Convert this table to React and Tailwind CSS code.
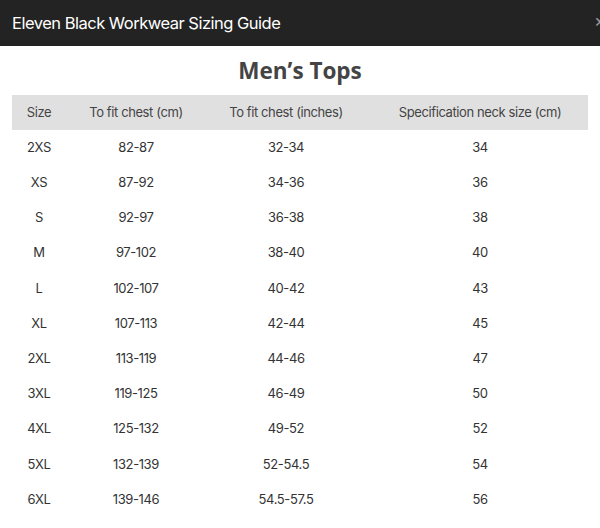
import React from 'react';

const rows = [
  ['2XS', '82-87', '32-34', '34'],
  ['XS', '87-92', '34-36', '36'],
  ['S', '92-97', '36-38', '38'],
  ['M', '97-102', '38-40', '40'],
  ['L', '102-107', '40-42', '43'],
  ['XL', '107-113', '42-44', '45'],
  ['2XL', '113-119', '44-46', '47'],
  ['3XL', '119-125', '46-49', '50'],
  ['4XL', '125-132', '49-52', '52'],
  ['5XL', '132-139', '52-54.5', '54'],
  ['6XL', '139-146', '54.5-57.5', '56'],
];

const cols = 'grid grid-cols-[54px_140px_160px_228px]';

export default function App() {
  return (
    <div className="w-[600px] h-[528px] overflow-hidden bg-white font-['Inter',sans-serif]">
      {/* Top bar */}
      <div className="relative h-[46px] bg-[#232323] flex items-center pl-3">
        <h2 className="text-white text-[16.5px] tracking-[-0.5px]">Eleven Black Workwear Sizing Guide</h2>
        <span className="absolute right-[-6px] top-[12px] text-[#999] text-[18px] leading-none">×</span>
      </div>

      {/* Title */}
      <h1 className="text-center text-[#444] text-[22.5px] font-bold mt-[12px] h-[26px] leading-[26px] font-['Open_Sans',sans-serif]">
        Men’s Tops
      </h1>

      {/* Table */}
      <div className="mx-3 mt-[11px] text-[13px] tracking-[-0.4px]">
        <div className={`${cols} h-[35px] items-center bg-[#e0e0e0] text-[#444]`}>
          <div className="text-center">Size</div>
          <div className="text-center">To fit chest (cm)</div>
          <div className="text-center">To fit chest (inches)</div>
          <div className="text-center">Specification neck size (cm)</div>
        </div>
        {rows.map((r) => (
          <div key={r[0]} className={`${cols} h-[35.2px] items-center text-[#333]`}>
            {r.map((c, i) => (
              <div key={i} className="text-center">{c}</div>
            ))}
          </div>
        ))}
      </div>
    </div>
  );
}
